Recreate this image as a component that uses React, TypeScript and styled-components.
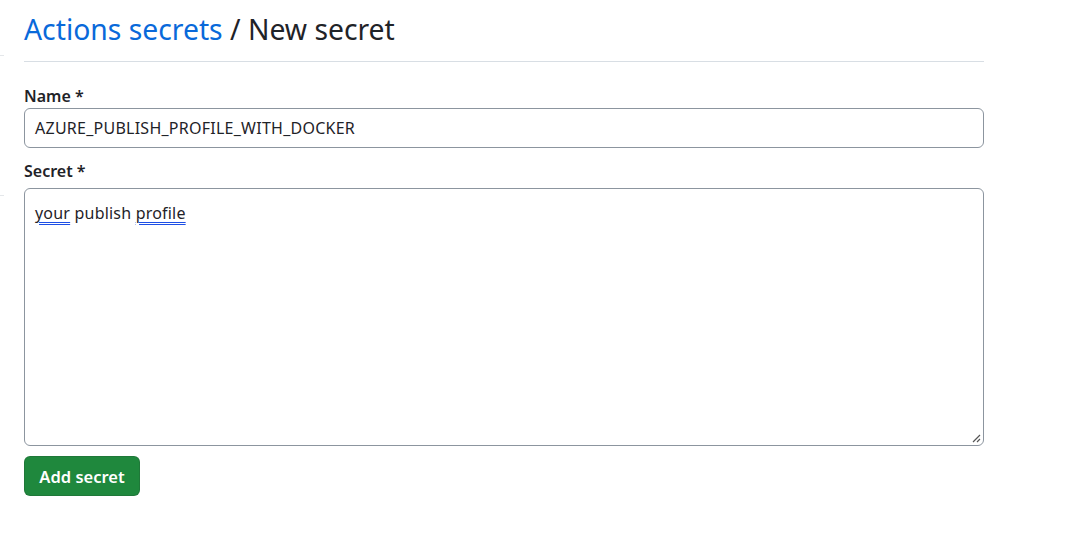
import React from "react";
import styled, { createGlobalStyle } from "styled-components";

const GlobalStyle = createGlobalStyle`
  body {
    margin: 0;
    background: #ffffff;
    font-family: "Noto Sans", "Liberation Sans", sans-serif;
    color: #1f2328;
  }
`;

const Page = styled.div`
  width: 1081px;
  height: 555px;
  padding: 0 97px 0 24px;
  box-sizing: border-box;
  position: relative;
`;

const Subhead = styled.div`
  padding-top: 10px;
  padding-bottom: 13px;
  border-bottom: 1px solid #d8dee4;
  margin-bottom: 22px;
`;

const Heading = styled.h2`
  margin: 0;
  font-size: 28.3px;
  font-weight: 400;
  line-height: 38px;
`;

const Crumb = styled.a`
  color: #0969da;
  text-decoration: none;
`;

const Field = styled.div<{ $after: number }>`
  display: flex;
  flex-direction: column;
  margin-bottom: ${(p) => p.$after}px;
`;

const Label = styled.label<{ $gap: number }>`
  font-size: 16px;
  font-weight: 600;
  line-height: 24px;
  margin-bottom: ${(p) => p.$gap}px;
`;

const TextInput = styled.div`
  height: 40px;
  box-sizing: border-box;
  border: 1px solid #8c959f;
  border-radius: 6px;
  padding: 0 10px;
  display: flex;
  align-items: center;
  font-size: 16px;
  letter-spacing: 0.25px;
`;

const TextArea = styled.div`
  position: relative;
  height: 258px;
  box-sizing: border-box;
  border: 1px solid #8c959f;
  border-radius: 6px;
  padding: 12px 10px;
  font-size: 16px;
  line-height: 24px;
  letter-spacing: 0.2px;
`;

const Spell = styled.span`
  text-decoration-line: underline;
  text-decoration-style: double;
  text-decoration-color: #1d4fe6;
  text-decoration-thickness: 1px;
  text-underline-offset: 3px;
`;

const Grip = styled.svg`
  position: absolute;
  right: 2px;
  bottom: 2px;
`;

const Button = styled.button`
  width: 116px;
  height: 40px;
  border: 1px solid rgba(31, 35, 40, 0.15);
  border-radius: 6px;
  background: #1f883d;
  color: #ffffff;
  font-family: inherit;
  font-size: 16.5px;
  font-weight: 600;
  padding: 0;
  cursor: pointer;
`;

const EdgeMark = styled.div<{ $top: number }>`
  position: absolute;
  left: 0;
  top: ${(p) => p.$top}px;
  width: 4px;
  height: 1px;
  background: #e4e7ea;
`;

export default function App() {
  return (
    <>
      <GlobalStyle />
      <Page>
        <EdgeMark $top={55} />
        <EdgeMark $top={195} />
        <Subhead>
          <Heading>
            <Crumb href="#">Actions secrets</Crumb> / New secret
          </Heading>
        </Subhead>
        <Field $after={11}>
          <Label $gap={0}>Name *</Label>
          <TextInput>AZURE_PUBLISH_PROFILE_WITH_DOCKER</TextInput>
        </Field>
        <Field $after={10}>
          <Label $gap={5}>Secret *</Label>
          <TextArea>
            <Spell>your</Spell> publish <Spell>profile</Spell>
            <Grip width="10" height="10" viewBox="0 0 10 10">
              <path d="M9 2 L2 9 M9 6 L6 9" stroke="#555" strokeWidth="1.2" />
            </Grip>
          </TextArea>
        </Field>
        <Button>Add secret</Button>
      </Page>
    </>
  );
}
